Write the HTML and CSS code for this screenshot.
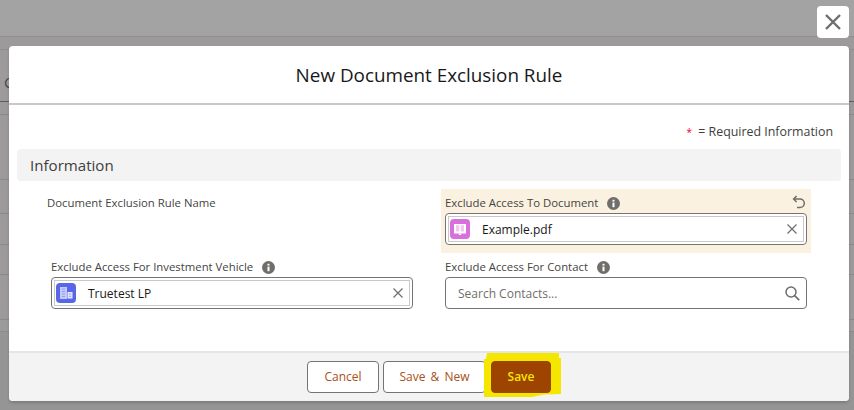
FILE: index.html
```html
<!DOCTYPE html>
<html lang="en">
<head>
<meta charset="utf-8">
<title>New Document Exclusion Rule</title>
<link rel="stylesheet" href="styles.css">
</head>
<body>
<div class="backdrop">
  <div class="topbar"></div>
  <div class="table">
    <div class="tr r1"><span class="clip">C</span></div>
    <div class="tr r2"></div>
    <div class="tr r3"></div>
    <div class="tr r4"></div>
    <div class="tr r5"></div>
    <div class="tr r6"></div>
    <div class="tr r7"></div>
    <div class="tr r8"></div>
  </div>
</div>

<button class="close" aria-label="Close">
  <svg viewBox="0 0 16 16" width="16" height="16"><path d="M1 1 15 15M15 1 1 15" class="x-heavy"/></svg>
</button>

<section class="modal">
  <header class="head"><h1>New Document Exclusion Rule</h1></header>
  <div class="body">
    <p class="req"><span class="star">*</span> = Required Information</p>
    <h2 class="sect">Information</h2>
    <div class="form">
      <div class="cell plain"><span class="lab">Document Exclusion Rule Name</span></div>
      <div class="cell edited">
        <div class="labrow">
          <span class="lab">Exclude Access To Document</span>
          <svg class="info" viewBox="0 0 13 13"><circle cx="6.5" cy="6.5" r="6.5" fill="#706e6b"/><rect x="5.5" y="5.6" width="2" height="4.6" fill="#fff"/><rect x="5.5" y="2.8" width="2" height="1.8" fill="#fff"/></svg>
          <svg class="undo" viewBox="0 0 14 14"><path d="M4.6 1 1.6 4l3 3M1.8 4H8a4.2 4.2 0 0 1 0 8.6H5" fill="none" stroke="#706e6b" stroke-width="1.5"/></svg>
        </div>
        <div class="pill">
          <div class="pill-in">
            <svg class="ico" viewBox="0 0 20 20"><rect width="20" height="20" rx="4" fill="#d96fdc"/><path d="M4 5h12v9.500H4z" fill="#fff"/><path d="M6 6.200h3.300v6.300H6zM10.700 6.200H14v6.300h-3.300z" fill="#f1c6f2"/><path d="M8.800 14.500h2.400V16H8.800z" fill="#fff"/></svg>
            <span class="val">Example.pdf</span>
            <svg class="clear" viewBox="0 0 10 10"><path d="M.5.5l9 9M9.500.5l-9 9" stroke="#706e6b" stroke-width="1.2"/></svg>
          </div>
        </div>
      </div>
      <div class="cell">
        <div class="labrow">
          <span class="lab">Exclude Access For Investment Vehicle</span>
          <svg class="info" viewBox="0 0 13 13"><circle cx="6.5" cy="6.5" r="6.5" fill="#706e6b"/><rect x="5.5" y="5.6" width="2" height="4.6" fill="#fff"/><rect x="5.5" y="2.8" width="2" height="1.8" fill="#fff"/></svg>
        </div>
        <div class="pill">
          <div class="pill-in">
            <svg class="ico" viewBox="0 0 20 20"><rect width="20" height="20" rx="4" fill="#5867e8"/><path d="M4 4h7v12H4z" fill="#c3caf9"/><path d="M11.500 9h5v6.500h-5z" fill="#e4e7fd"/><path d="M6 6h3M6 8.500h3M6 11h3M6 13.500h3M12.800 11h2.400M12.800 13.300h2.400" stroke="#8d98f0" stroke-width=".9"/></svg>
            <span class="val">Truetest LP</span>
            <svg class="clear" viewBox="0 0 10 10"><path d="M.5.5l9 9M9.500.5l-9 9" stroke="#706e6b" stroke-width="1.2"/></svg>
          </div>
        </div>
      </div>
      <div class="cell">
        <div class="labrow">
          <span class="lab">Exclude Access For Contact</span>
          <svg class="info" viewBox="0 0 13 13"><circle cx="6.5" cy="6.5" r="6.5" fill="#706e6b"/><rect x="5.5" y="5.6" width="2" height="4.6" fill="#fff"/><rect x="5.5" y="2.8" width="2" height="1.8" fill="#fff"/></svg>
        </div>
        <div class="search">
          <span class="ph">Search Contacts...</span>
          <svg class="mag" viewBox="0 0 15 15"><circle cx="6" cy="6" r="5" fill="none" stroke="#706e6b" stroke-width="1.5"/><path d="M9.600 9.600 14.200 14.200" stroke="#706e6b" stroke-width="1.700"/></svg>
        </div>
      </div>
    </div>
  </div>
  <footer class="foot">
    <button class="btn b-cancel">Cancel</button>
    <button class="btn b-new">Save &amp; New</button>
    <span class="mark-wrap">
      <svg class="marker" viewBox="0 0 78 46" width="78" height="46"><path d="M3 0H75V5L77 5V41L60 41.500 48 44H0V6H2Z" fill="#f5e600"/></svg>
      <button class="btn brand">Save</button>
    </span>
  </footer>
</section>
</body>
</html>
```

FILE: styles.css
```css
* { box-sizing: border-box; }
html, body { margin: 0; padding: 0; }
body {
  width: 854px;
  height: 410px;
  overflow: hidden;
  background: #969595;
  font-family: "Open Sans", "Noto Sans", sans-serif;
  color: #444;
  position: relative;
}
.backdrop { height: 100%; }
.topbar {
  height: 37px;
  background: #a3a3a3;
  border-bottom: 1px solid #8f8f8f;
}
.table { height: 295px; background: #9c9a9a; padding-top: 12px; border-bottom: 1px solid #8c8c8c; }
.tr { border-top: 1px solid #8a8a8a; position: relative; }
.r1 { height: 52px; border-color: #8f8f8f; }
.r2 { height: 13px; border-color: #5e5e5e; }
.r3 { height: 65px; }
.r4 { height: 34px; }
.r5 { height: 31px; }
.r6 { height: 30px; }
.r7 { height: 45px; }
.r8 { height: 12px; }
.clip { position: absolute; left: 4px; top: 22px; font-size: 15px; color: #4a4a4a; }

.close {
  position: absolute;
  left: 817px;
  top: 6px;
  width: 32px;
  height: 32px;
  padding: 0;
  border: 0;
  border-radius: 4px;
  background: #fff;
  display: flex;
  align-items: center;
  justify-content: center;
}
.x-heavy { stroke: #706e6b; stroke-width: 2.4; fill: none; }

.modal {
  position: absolute;
  left: 9px;
  top: 46px;
  width: 840px;
  height: 355px;
  background: #fff;
  border-radius: 4px;
  box-shadow: 0 2px 3px rgba(0,0,0,.16);
  display: flex;
  flex-direction: column;
  overflow: hidden;
}
.head {
  height: 59px;
  flex: none;
  border-bottom: 2px solid #c9c9c9;
  display: flex;
  align-items: center;
  justify-content: center;
}
.head h1 { margin: 0; font-size: 18.85px; font-weight: 400; color: #181818; line-height: 24px; }

.body { flex: 1; padding: 16px 8px 0; }
.req { margin: 0; height: 28px; text-align: right; font-size: 12.4px; line-height: 22px; padding-right: 8px; color: #3e3e3c; }
.star { color: #ea001e; margin-right: 3px; font-size: 10px; }
.sect {
  margin: 0;
  height: 32px;
  background: #f3f3f3;
  border-radius: 4px;
  padding-left: 13px;
  font-size: 15.1px;
  font-weight: 400;
  line-height: 32px;
  color: #3e3e3c;
}
.form {
  display: grid;
  grid-template-columns: 370px 370px;
  column-gap: 24px;
  margin: 8px 0 0 30px;
  grid-template-rows: 64px 64px;
}
.cell { padding: 4px 4px 0; }
.cell.plain { padding: 1px 0 0; }
.cell.edited { background: #faf1e0; }
.lab { font-size: 11.35px; line-height: 18px; color: #444; }
.labrow { display: flex; align-items: center; height: 20px; gap: 9px; }
.info { width: 13px; height: 13px; flex: none; }
.undo { width: 14px; height: 14px; margin-left: auto; margin-right: 1px; margin-top: -3px; }
.pill {
  height: 32px;
  border: 1px solid #747474;
  border-radius: 4px;
  background: #fff;
  padding: 2px;
}
.pill-in {
  height: 26px;
  border: 1px solid #c9c9c9;
  display: flex;
  align-items: center;
  padding-left: 1px;
}
.ico { width: 20px; height: 20px; flex: none; }
.val { margin-left: 12px; font-size: 12px; color: #181818; flex: 1; }
.clear { width: 10px; height: 10px; margin-right: 6px; flex: none; }
.search {
  height: 32px;
  border: 1px solid #747474;
  border-radius: 4px;
  background: #fff;
  display: flex;
  align-items: center;
  padding: 0 6px 0 12px;
}
.ph { flex: 1; font-size: 12px; color: #706e6b; }
.mag { width: 15px; height: 15px; }

.foot {
  height: 50px;
  flex: none;
  background: #f3f3f3;
  border-top: 2px solid #e5e5e5;
  display: flex;
  justify-content: flex-end;
  align-items: flex-start;
  padding: 8px 298px 0 0;
  gap: 4px;
}
.btn {
  height: 32px;
  padding: 0;
  border: 1px solid #747474;
  border-radius: 4px;
  background: #fff;
  font: 400 12px/30px "Open Sans", "Noto Sans", sans-serif;
  color: #a94f20;
}
.b-cancel { width: 72px; }
.b-new { width: 103px; word-spacing: 2px; }
.mark-wrap { position: relative; margin-left: 1px; display: block; height: 32px; }
.marker { position: absolute; left: -7px; top: -8px; }
.btn.brand {
  position: relative;
  display: block;
  width: 60px;
  background: #9c4400;
  border-color: #9c4400;
  color: #f5e600;
  font-weight: 600;
}
```
